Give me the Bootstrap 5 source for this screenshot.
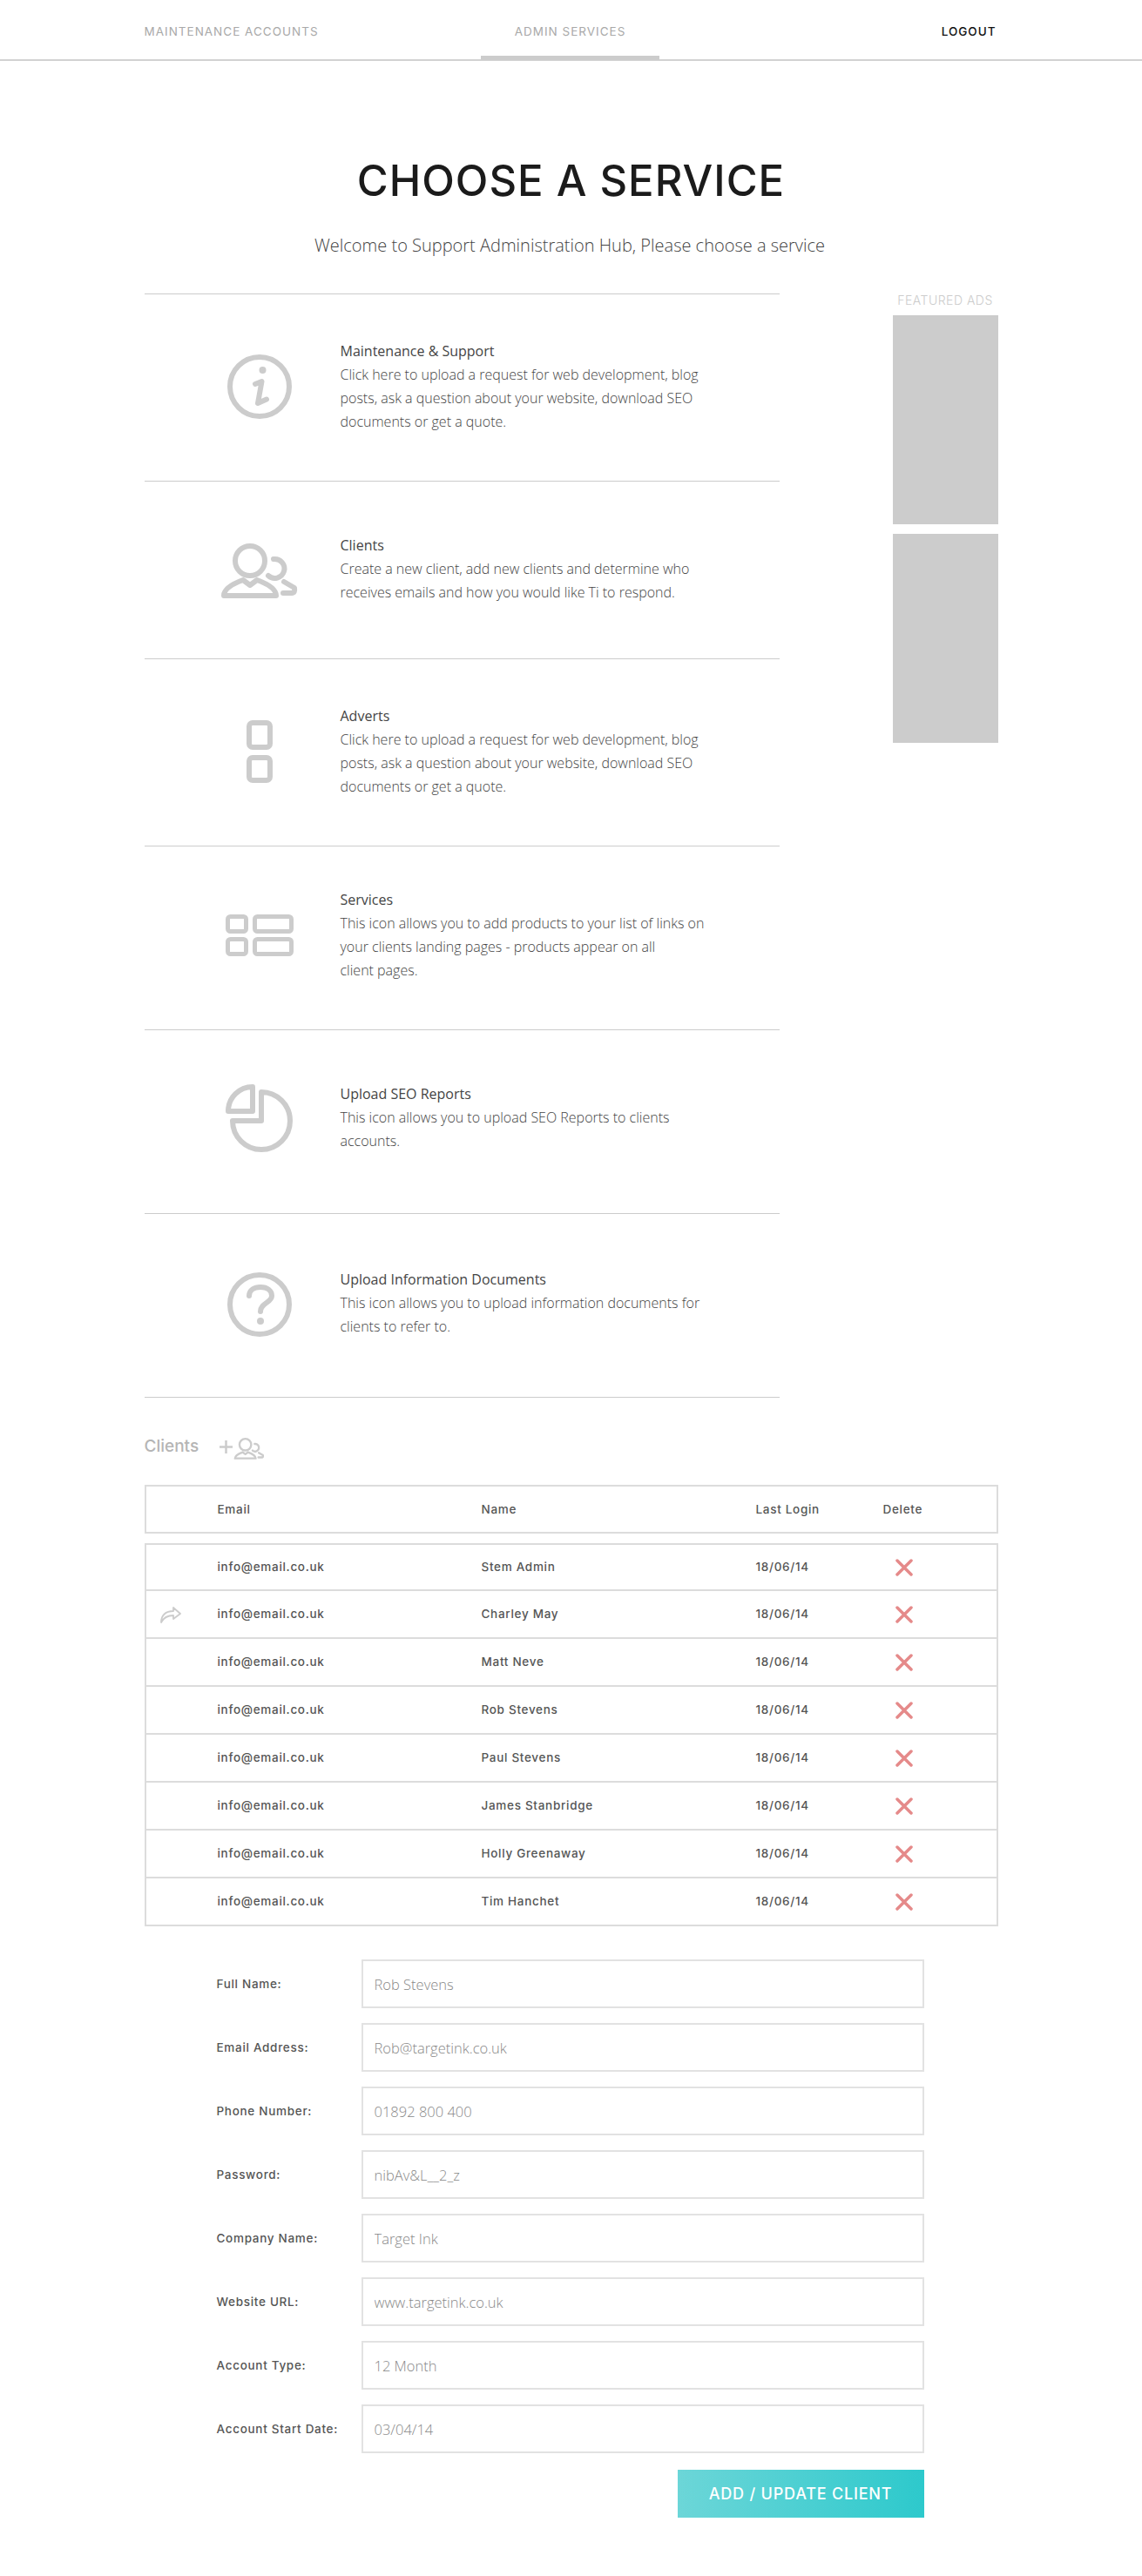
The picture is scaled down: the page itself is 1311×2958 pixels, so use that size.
<!doctype html>
<html lang="en">
  <head>
    <meta charset="UTF-8" />
    <meta name="viewport" content="width=device-width, initial-scale=1.0" />
    <title>Choose a Service</title>
    <link
      href="https://cdn.jsdelivr.net/npm/bootstrap@5.3.0/dist/css/bootstrap.min.css"
      rel="stylesheet"
    />
    <style>
      body {
        font-family: "Open Sans", sans-serif;
        font-weight: 300;
        color: #444;
        background: #fff;
      }
      .hub-wrap {
        width: 980px;
        margin: 0 auto;
      }
      .hub-head,
      .hub-label,
      .hub-grid,
      .hub-add {
        font-family: Inter, sans-serif;
      }
      .hub-top {
        height: 70px;
        border-bottom: 2px solid #d2d2d2;
      }
      .hub-top .hub-wrap {
        height: 68px;
      }
      .hub-tab {
        flex: 1 1 0;
        height: 69px;
        line-height: 72px;
        font-family: Inter, sans-serif;
        font-size: 13.5px;
        font-weight: 400;
        letter-spacing: 1px;
        color: #a9a9a9;
        text-decoration: none;
      }
      .hub-tab-on {
        flex: 0 0 205px;
        border-bottom: 5px solid #ccc;
      }
      .hub-tab-out {
        color: #111;
        font-weight: 500;
        padding-right: 2px;
      }
      .hub-head {
        margin: 108px 0 0;
        font-size: 49px;
        line-height: 60px;
        font-weight: 500;
        color: #1b1b1b;
        letter-spacing: 1px;
      }
      .hub-sub {
        margin: 30px 0 41px;
        padding-right: 3px;
        font-size: 20px;
        line-height: 28px;
        color: #444;
      }
      .hub-services {
        width: 729px;
        border-top: 1px solid #ccc;
      }
      .hub-svc {
        border-bottom: 1px solid #ccc;
      }
      .hub-svc-1 {
        padding: 52px 0 54px;
      }
      .hub-svc-2 {
        padding: 60px 0 62px;
      }
      .hub-svc-4 {
        padding: 48px 0 54px;
      }
      .hub-svc-5 {
        padding: 60px 0 69px;
      }
      .hub-svc-6 {
        padding: 62px 0 67px;
      }
      .hub-icon {
        flex: 0 0 225px;
        padding-left: 40px;
        height: 80px;
        display: flex;
        align-items: center;
        justify-content: center;
        width: 225px;
      }
      .hub-icon svg {
        display: block;
      }
      .hub-up {
        margin-top: -8px;
      }
      .hub-down {
        margin-top: 3px;
      }
      .hub-text {
        width: 425px;
        font-size: 16px;
        line-height: 27px;
      }
      .hub-text strong {
        display: block;
        font-weight: 400;
      }
      .hub-side {
        width: 121px;
      }
      .hub-side-title {
        font-family: Inter, sans-serif;
        font-size: 14px;
        line-height: 16px;
        letter-spacing: 0.5px;
        margin: 0 0 9px;
        color: #ccc;
        text-align: center;
        white-space: nowrap;
      }
      .hub-ad {
        height: 240px;
        background: #ccc;
        margin-bottom: 11px;
      }
      .hub-add {
        height: 100px;
        padding-top: 12px;
        color: #b5b5b5;
        font-size: 19px;
        font-weight: 500;
      }
      .hub-grid {
        font-size: 13.5px;
        font-weight: 500;
        letter-spacing: 0.7px;
        color: #555;
      }
      .hub-line {
        display: grid;
        grid-template-columns: 82px 303px 315px 146px 1fr;
        align-items: center;
        height: 55px;
        border: 2px solid #dcdcdc;
      }
      .hub-line + .hub-line {
        border-top: 0;
      }
      .hub-line-top {
        height: 56px;
        margin-bottom: 11px;
      }
      .hub-del {
        padding-left: 14px;
      }
      .hub-form {
        margin-top: 38px;
        padding: 0 85px 0 83px;
      }
      .hub-field {
        height: 56px;
        margin-bottom: 17px;
      }
      .hub-label {
        flex: 0 0 166px;
        margin: 0;
        font-size: 13.5px;
        font-weight: 500;
        letter-spacing: 0.7px;
        color: #555;
        white-space: nowrap;
      }
      .hub-input.form-control {
        height: 56px;
        border: 2px solid #e2e2e2;
        border-radius: 0;
        padding: 0 13px;
        font-size: 16.5px;
        font-weight: 300;
      }
      .hub-input.form-control::placeholder {
        color: #888;
        opacity: 1;
      }
      .hub-btn.btn {
        width: 283px;
        height: 55px;
        margin-top: 2px;
        border: 0;
        border-radius: 0;
        background: linear-gradient(90deg, #6cd6d8, #2dc9cc);
        color: #fff;
        font-family: Inter, sans-serif;
        font-size: 18px;
        font-weight: 500;
        letter-spacing: 0.8px;
      }
    </style>
  </head>
  <body>
    <svg width="0" height="0" class="d-block">
      <symbol id="people-icon" viewBox="0 0 96 85">
        <g fill="none" stroke="#ccc" stroke-width="6" stroke-linecap="round" stroke-linejoin="round">
          <circle cx="37" cy="37" r="17" />
          <path d="M7 77C7 69 18 63 29 59L37 65L45 59C56 63 67 69 67 77Z" />
          <path d="M64 35A11 11 0 1 1 58 54" />
          <path d="M76 61L88 68Q89 74 85 74H75" />
        </g>
      </symbol>
    </svg>

    <nav class="hub-top">
      <div class="hub-wrap d-flex">
        <a class="hub-tab" href="#">MAINTENANCE ACCOUNTS</a>
        <a class="hub-tab hub-tab-on text-center" href="#">ADMIN SERVICES</a>
        <a class="hub-tab hub-tab-out text-end" href="#">LOGOUT</a>
      </div>
    </nav>

    <div class="hub-wrap">
      <h1 class="hub-head text-center">CHOOSE A SERVICE</h1>
      <p class="hub-sub text-center">Welcome to Support Administration Hub, Please choose a service</p>

      <div class="d-flex justify-content-between">
        <div class="hub-services">
          <div class="hub-svc hub-svc-1 d-flex align-items-center">
            <div class="hub-icon">
              <svg width="74" height="74" viewBox="0 0 74 74" fill="none" stroke="#ccc" stroke-width="6" stroke-linecap="round" stroke-linejoin="round">
                <circle cx="37" cy="37" r="34" />
                <path d="M32 34L39.5 31L35 56L45 51.5" />
                <circle cx="40.5" cy="18" r="4" fill="#ccc" stroke="none" />
              </svg>
            </div>
            <div class="hub-text">
              <strong>Maintenance &amp; Support</strong>
              Click here to upload a request for web development, blog posts, ask a question about your website, download SEO documents or get a quote.
            </div>
          </div>

          <div class="hub-svc hub-svc-2 d-flex align-items-center">
            <div class="hub-icon">
              <svg class="hub-up" width="96" height="85" viewBox="0 0 96 85"><use href="#people-icon" /></svg>
            </div>
            <div class="hub-text">
              <strong>Clients</strong>
              Create a new client, add new clients and determine who receives emails and how you would like Ti to respond.
            </div>
          </div>

          <div class="hub-svc hub-svc-1 d-flex align-items-center">
            <div class="hub-icon">
              <svg width="30" height="72" viewBox="0 0 30 72" fill="none" stroke="#ccc" stroke-width="6">
                <rect x="3" y="3" width="24" height="28" rx="4" />
                <rect x="3" y="43" width="24" height="26" rx="4" />
              </svg>
            </div>
            <div class="hub-text">
              <strong>Adverts</strong>
              Click here to upload a request for web development, blog posts, ask a question about your website, download SEO documents or get a quote.
            </div>
          </div>

          <div class="hub-svc hub-svc-4 d-flex align-items-center">
            <div class="hub-icon">
              <svg width="78" height="48" viewBox="0 0 78 48" fill="none" stroke="#ccc" stroke-width="5">
                <rect x="2.5" y="2.5" width="21" height="17" rx="3" />
                <rect x="33.5" y="2.5" width="42" height="17" rx="3" />
                <rect x="2.5" y="28.5" width="21" height="17" rx="3" />
                <rect x="33.5" y="28.5" width="42" height="17" rx="3" />
              </svg>
            </div>
            <div class="hub-text">
              <strong>Services</strong>
              This icon allows you to add products to your list of links on your clients landing pages - products appear on all<br />client pages.
            </div>
          </div>

          <div class="hub-svc hub-svc-5 d-flex align-items-center">
            <div class="hub-icon">
              <svg class="hub-down" width="78" height="80" viewBox="0 0 78 80" fill="none" stroke="#ccc" stroke-width="6" stroke-linejoin="round">
                <path d="M3 31A28 28 0 0 1 31 3V31Z" />
                <path d="M41 9A33 33 0 1 1 8 42H41Z" />
              </svg>
            </div>
            <div class="hub-text">
              <strong>Upload SEO Reports</strong>
              This icon allows you to upload SEO Reports to clients accounts.
            </div>
          </div>

          <div class="hub-svc hub-svc-6 d-flex align-items-center">
            <div class="hub-icon">
              <svg class="hub-down" width="74" height="74" viewBox="0 0 74 74" fill="none" stroke="#ccc" stroke-width="6" stroke-linecap="round">
                <circle cx="37" cy="37" r="34" />
                <path d="M25 27C25 20 31 17 38 17C46 17 51 21 51 27C51 35 38 35 38 45" />
                <circle cx="38" cy="56" r="4" fill="#ccc" stroke="none" />
              </svg>
            </div>
            <div class="hub-text">
              <strong>Upload Information Documents</strong>
              This icon allows you to upload information documents for clients to refer to.
            </div>
          </div>
        </div>

        <aside class="hub-side">
          <p class="hub-side-title">FEATURED ADS</p>
          <div class="hub-ad"></div>
          <div class="hub-ad"></div>
        </aside>
      </div>

      <div class="hub-add d-flex align-items-center gap-4">
        <span>Clients</span>
        <span class="d-flex align-items-center">
          <svg width="15" height="15" viewBox="0 0 15 15" stroke="#ccc" stroke-width="2.500"><path d="M0 7.500H15M7.500 0V15" /></svg>
          <svg width="38" height="34" viewBox="0 0 96 85"><use href="#people-icon" /></svg>
        </span>
      </div>

      <div class="hub-grid">
        <div class="hub-line hub-line-top">
          <span></span><span>Email</span><span>Name</span><span>Last Login</span><span>Delete</span>
        </div>

        <div>
          <div class="hub-line">
            <span></span><span>info@email.co.uk</span><span>Stem Admin</span><span>18/06/14</span>
            <span class="hub-del"><svg width="20" height="20" viewBox="0 0 20 20" stroke="#e58a8a" stroke-width="3.500" stroke-linecap="round"><path d="M2 2L18 18M18 2L2 18" /></svg></span>
          </div>
          <div class="hub-line">
            <span class="ps-3"><svg width="24" height="19" viewBox="0 0 24 19" fill="none" stroke="#ccc" stroke-width="1.800" stroke-linejoin="round"><path d="M15 1L23 8L15 14V10C9 10 4 12 1 18C1 10 6 5 15 5Z" /></svg></span>
            <span>info@email.co.uk</span><span>Charley May</span><span>18/06/14</span>
            <span class="hub-del"><svg width="20" height="20" viewBox="0 0 20 20" stroke="#e58a8a" stroke-width="3.500" stroke-linecap="round"><path d="M2 2L18 18M18 2L2 18" /></svg></span>
          </div>
          <div class="hub-line">
            <span></span><span>info@email.co.uk</span><span>Matt Neve</span><span>18/06/14</span>
            <span class="hub-del"><svg width="20" height="20" viewBox="0 0 20 20" stroke="#e58a8a" stroke-width="3.500" stroke-linecap="round"><path d="M2 2L18 18M18 2L2 18" /></svg></span>
          </div>
          <div class="hub-line">
            <span></span><span>info@email.co.uk</span><span>Rob Stevens</span><span>18/06/14</span>
            <span class="hub-del"><svg width="20" height="20" viewBox="0 0 20 20" stroke="#e58a8a" stroke-width="3.500" stroke-linecap="round"><path d="M2 2L18 18M18 2L2 18" /></svg></span>
          </div>
          <div class="hub-line">
            <span></span><span>info@email.co.uk</span><span>Paul Stevens</span><span>18/06/14</span>
            <span class="hub-del"><svg width="20" height="20" viewBox="0 0 20 20" stroke="#e58a8a" stroke-width="3.500" stroke-linecap="round"><path d="M2 2L18 18M18 2L2 18" /></svg></span>
          </div>
          <div class="hub-line">
            <span></span><span>info@email.co.uk</span><span>James Stanbridge</span><span>18/06/14</span>
            <span class="hub-del"><svg width="20" height="20" viewBox="0 0 20 20" stroke="#e58a8a" stroke-width="3.500" stroke-linecap="round"><path d="M2 2L18 18M18 2L2 18" /></svg></span>
          </div>
          <div class="hub-line">
            <span></span><span>info@email.co.uk</span><span>Holly Greenaway</span><span>18/06/14</span>
            <span class="hub-del"><svg width="20" height="20" viewBox="0 0 20 20" stroke="#e58a8a" stroke-width="3.500" stroke-linecap="round"><path d="M2 2L18 18M18 2L2 18" /></svg></span>
          </div>
          <div class="hub-line">
            <span></span><span>info@email.co.uk</span><span>Tim Hanchet</span><span>18/06/14</span>
            <span class="hub-del"><svg width="20" height="20" viewBox="0 0 20 20" stroke="#e58a8a" stroke-width="3.500" stroke-linecap="round"><path d="M2 2L18 18M18 2L2 18" /></svg></span>
          </div>
        </div>
      </div>

      <form class="hub-form">
        <div class="hub-field d-flex align-items-center">
          <label class="hub-label">Full Name:</label>
          <input class="form-control hub-input" type="text" placeholder="Rob Stevens" />
        </div>
        <div class="hub-field d-flex align-items-center">
          <label class="hub-label">Email Address:</label>
          <input class="form-control hub-input" type="text" placeholder="Rob@targetink.co.uk" />
        </div>
        <div class="hub-field d-flex align-items-center">
          <label class="hub-label">Phone Number:</label>
          <input class="form-control hub-input" type="text" placeholder="01892 800 400" />
        </div>
        <div class="hub-field d-flex align-items-center">
          <label class="hub-label">Password:</label>
          <input class="form-control hub-input" type="text" placeholder="nibAv&amp;L__2_z" />
        </div>
        <div class="hub-field d-flex align-items-center">
          <label class="hub-label">Company Name:</label>
          <input class="form-control hub-input" type="text" placeholder="Target Ink" />
        </div>
        <div class="hub-field d-flex align-items-center">
          <label class="hub-label">Website URL:</label>
          <input class="form-control hub-input" type="text" placeholder="www.targetink.co.uk" />
        </div>
        <div class="hub-field d-flex align-items-center">
          <label class="hub-label">Account Type:</label>
          <input class="form-control hub-input" type="text" placeholder="12 Month" />
        </div>
        <div class="hub-field d-flex align-items-center">
          <label class="hub-label">Account Start Date:</label>
          <input class="form-control hub-input" type="text" placeholder="03/04/14" />
        </div>
        <div class="d-flex justify-content-end">
          <button class="btn hub-btn" type="button">ADD / UPDATE CLIENT</button>
        </div>
      </form>
    </div>

    <script src="https://cdn.jsdelivr.net/npm/bootstrap@5.3.0/dist/js/bootstrap.bundle.min.js"></script>
  </body>
</html>
